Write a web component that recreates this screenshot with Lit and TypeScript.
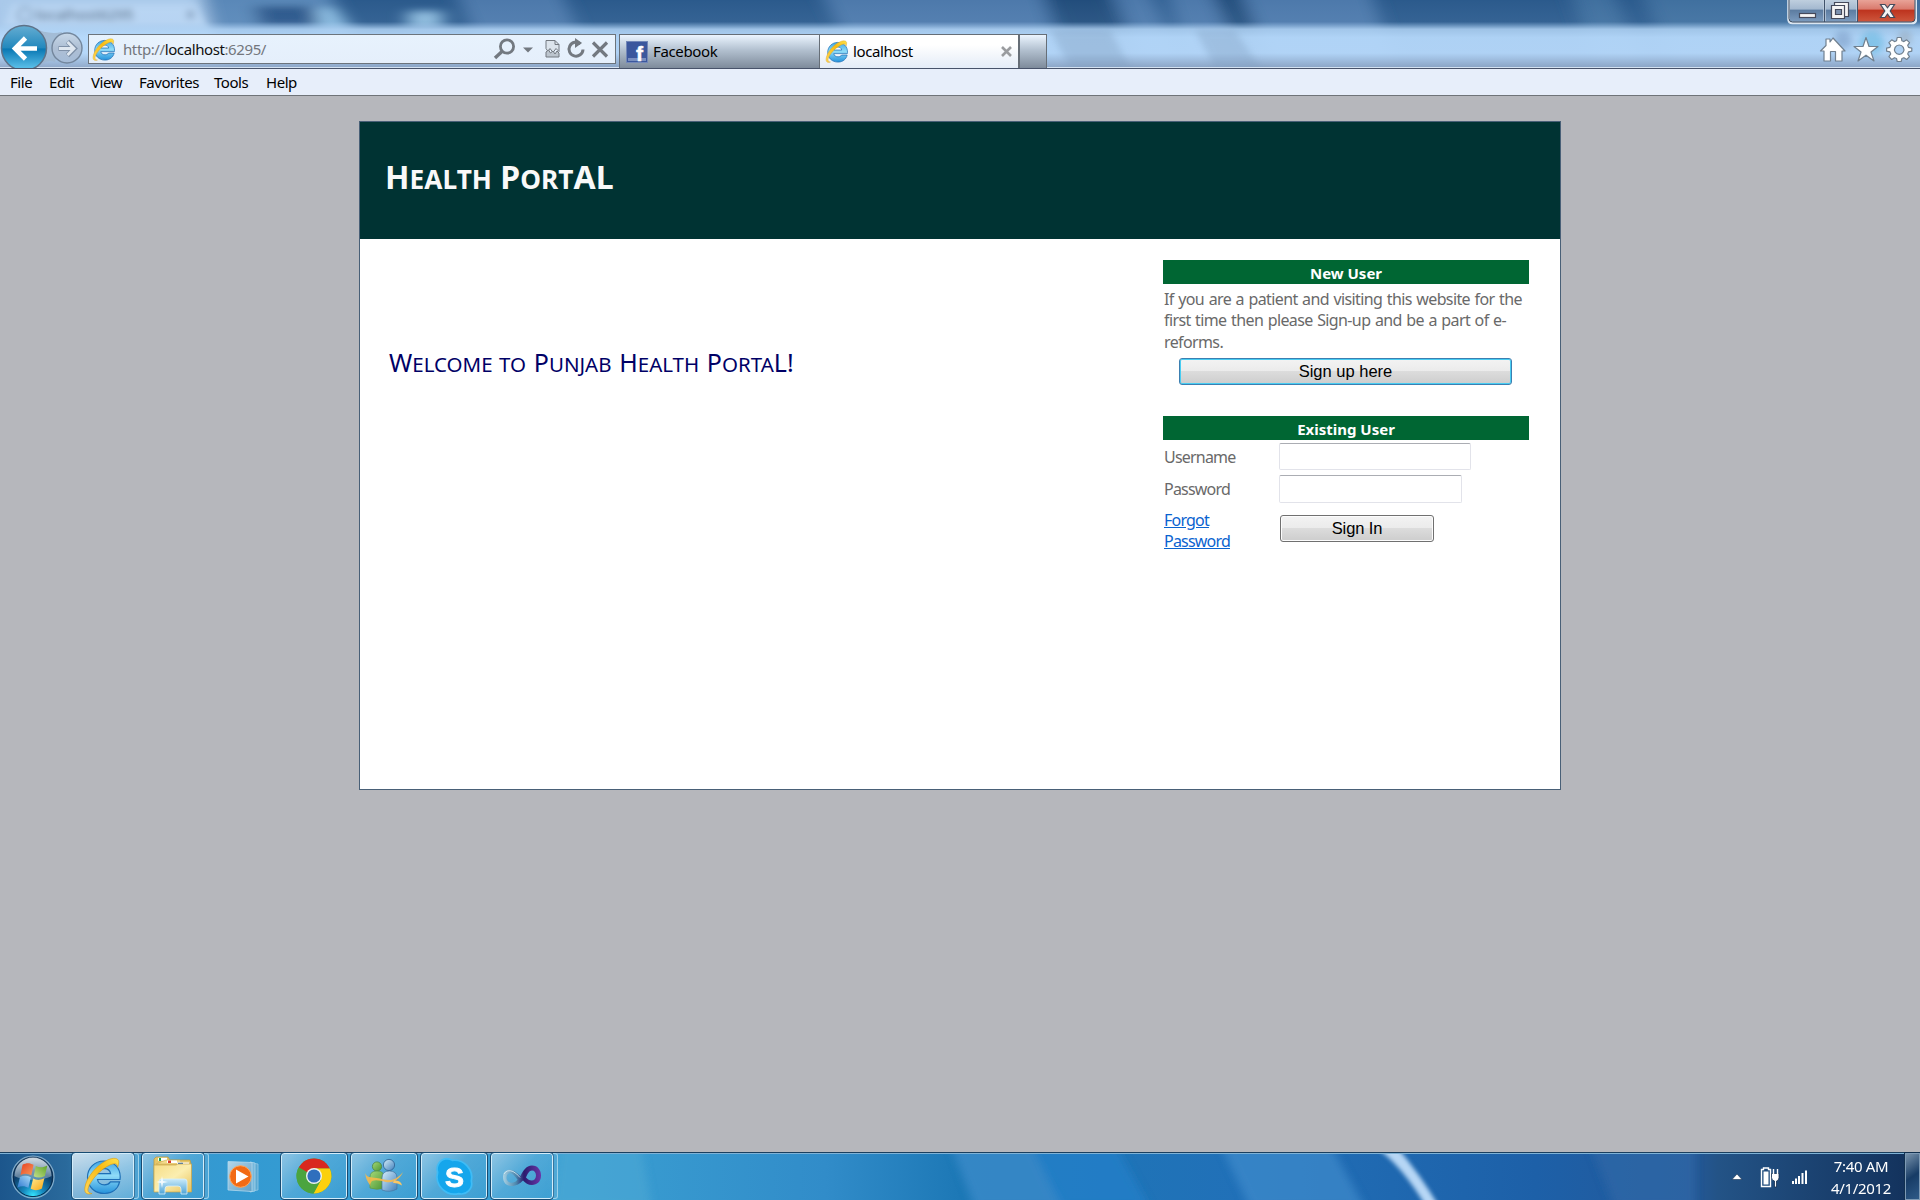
import { LitElement, html, svg, css } from "lit";
import { customElement } from "lit/decorators.js";

const ieLogo = (id: string) => html`<svg class="ie" viewBox="0 0 38 38">
  <defs>
    <linearGradient id="${id}b" x1="0" y1="0" x2="0" y2="1">
      <stop offset="0" stop-color="#3fa5e2" /><stop offset=".45" stop-color="#8fdcf8" /><stop offset="1" stop-color="#2592db" />
    </linearGradient>
    <linearGradient id="${id}g" x1="0" y1="1" x2="1" y2="0">
      <stop offset="0" stop-color="#ffd75a" /><stop offset=".6" stop-color="#f8bb12" /><stop offset="1" stop-color="#ffe14a" />
    </linearGradient>
  </defs>
  <path d="M37 22.500H14.500c.6 3.600 3.300 5.300 7 5.300 2.700 0 4.700-.9 5.900-2.900h9.200C34.900 32 29.300 36.500 21.500 36.500 11.800 36.500 4.500 29.800 4.500 20.300 4.500 11 11.800 4 21 4c9.800 0 16.500 6.900 16.200 16.500zM14.600 16.600h13c-.6-3.300-3-5-6.400-5-3.500 0-6 1.800-6.600 5z" fill="url(#${id}b)" stroke="#1e6fb6" stroke-width="1.200" fill-rule="evenodd" />
  <path d="M9 36.500C4 38 1.200 36 1.800 31 3 20.500 14 7.500 25 2.800c5.500-2.400 10.500-2 10.800 2 .1 1.800-.4 3.700-1.200 5.500.2-3.700-2.300-4.600-7.300-2.500C17.600 12 7.500 23.500 5.200 31c-1 3.200.5 5.200 3.800 5.500z" fill="url(#${id}g)" stroke="#d79a14" stroke-width=".6" />
</svg>`;

const startOrb = svg`
  <defs>
    <radialGradient id="orb" cx=".5" cy=".95" r=".85">
      <stop offset="0" stop-color="#35e6ff" /><stop offset=".3" stop-color="#1688bd" /><stop offset=".7" stop-color="#0c3d69" /><stop offset="1" stop-color="#3b6487" />
    </radialGradient>
    <linearGradient id="orbShine" x1="0" y1="0" x2="0" y2="1">
      <stop offset="0" stop-color="#fff" stop-opacity=".75" /><stop offset="1" stop-color="#fff" stop-opacity=".28" />
    </linearGradient>
    <linearGradient id="wr" x1="0" y1="0" x2="1" y2="1"><stop offset="0" stop-color="#e8401f" /><stop offset="1" stop-color="#f79a5c" /></linearGradient>
    <linearGradient id="wg" x1="1" y1="0" x2="0" y2="1"><stop offset="0" stop-color="#5da326" /><stop offset="1" stop-color="#c5e08c" /></linearGradient>
    <linearGradient id="wb" x1="0" y1="1" x2="1" y2="0"><stop offset="0" stop-color="#2e78cf" /><stop offset="1" stop-color="#a9dcfa" /></linearGradient>
    <linearGradient id="wy" x1="1" y1="1" x2="0" y2="0"><stop offset="0" stop-color="#f8a712" /><stop offset="1" stop-color="#fdea93" /></linearGradient>
  </defs>
  <circle cx="22" cy="22" r="21" fill="url(#orb)" stroke="#86aecb" stroke-width="1.2" />
  <circle cx="22" cy="22" r="19.600" fill="none" stroke="#0b2c4d" stroke-width="1" />
  <path d="M3.500 21a18.500 18.500 0 0 1 37 0c-9 5-28 5-37 0z" fill="url(#orbShine)" />
  <g transform="translate(-2.200 -1.200) scale(1.100)">
    <path d="M12.500 10c3.500-2 6.800-1.800 10 0l-2 9.500c-3.200-1.800-6.500-1.900-9.800-.3z" fill="url(#wr)" />
    <path d="M24.500 11c3.500 1.800 6.800 1.700 10.500-.3l-2.200 9.500c-3.500 1.800-6.900 1.900-10.200.2z" fill="url(#wg)" />
    <path d="M10.200 21.200c3.300-1.600 6.500-1.500 9.800.2l-2.200 9.500c-3.200-1.900-6.400-1.900-9.900-.2z" fill="url(#wb)" />
    <path d="M22.100 22.400c3.400 1.700 6.800 1.500 10.300-.3l-2.300 9.400c-3.600 2-6.900 2-10.200.3z" fill="url(#wy)" />
  </g>`;

const folderIcon = html`<svg width="40" height="40" viewBox="0 0 40 40">
  <defs><linearGradient id="fold" x1="0" y1="0" x2="1" y2="1"><stop offset="0" stop-color="#f6dc85" /><stop offset=".5" stop-color="#fbeeb0" /><stop offset="1" stop-color="#e6c15c" /></linearGradient>
  <linearGradient id="clip" x1="0" y1="0" x2="0" y2="1"><stop offset="0" stop-color="#c9eafa" /><stop offset="1" stop-color="#4fa3d6" /></linearGradient></defs>
  <path d="M1 3l2-2h12l2 3h20l1 4v25H1z" fill="#e5c668" stroke="#b9963b" stroke-width=".7" />
  <path d="M5 1.800h9v3H5z" fill="#fff" /><path d="M6 2h2v3H6z" fill="#1ba14a" />
  <path d="M3 8l10-4h14l2 4z" fill="#f3da8b" stroke="#c8a64d" stroke-width=".5" />
  <path d="M14 4.500h10v2.500H14z" fill="#fff" /><path d="M15 4.500h3V7h-3z" fill="#db3a26" />
  <path d="M24 6.500h12V9H24z" fill="#fff" /><path d="M25 6.800h5V9h-5z" fill="#2a6dc6" />
  <path d="M1 9h22l2-1h13.500v28H1z" fill="url(#fold)" stroke="#c9a64a" stroke-width=".7" />
  <path d="M6 38V25.500q0-2.500 2.500-2.500h23q2.500 0 2.500 2.500V38h-6v-5q0-3-3-3H15q-3 0-3 3v5z" fill="url(#clip)" stroke="#d9f1fc" stroke-width=".8" />
  <path d="M9 20l1 5 5 1-5 1-1 5-1-5-5-1 5-1z" fill="#fff" opacity=".85" />
</svg>`;

const playerIcon = html`<svg width="34" height="34" viewBox="0 0 34 34">
  <defs><linearGradient id="cover" x1="0" y1="0" x2="1" y2="1"><stop offset="0" stop-color="#b4d7ea" /><stop offset="1" stop-color="#5fa0c8" /></linearGradient></defs>
  <path d="M25 3l6 1v26l-6 1z" fill="#5aa9d3" stroke="#94c9e4" stroke-width=".8" />
  <path d="M23 2l5 1v28l-5 1z" fill="#76b8dc" stroke="#a6d3ea" stroke-width=".8" />
  <path d="M1 1.500l24 1v29l-24-1.500z" fill="url(#cover)" stroke="#b2d8ec" stroke-width=".8" />
  <circle cx="13.500" cy="16.500" r="10.800" fill="#f26a14" stroke="#ffa75e" /><path d="M9 9.500l12.500 7L9 23.500z" fill="#fff" />
</svg>`;

const chromeIcon = html`<svg width="36" height="36" viewBox="0 0 36 36">
  <circle cx="18" cy="18" r="17.500" fill="#4ba43f" />
  <path d="M18 18L2.800 9.300A17.500 17.500 0 0 1 33.800 10.500H18z" fill="#d9281f" />
  <path d="M18 10.500h15.800A17.500 17.500 0 0 1 17.500 35.500L25 21.500z" fill="#fbd00d" />
  <path d="M2.800 9.300A17.500 17.500 0 0 0 17.500 35.500L25 22l-7-3-7 2z" fill="#4ba43f" />
  <circle cx="18" cy="18" r="8" fill="#eef2f4" /><circle cx="18" cy="18" r="6.600" fill="#2f6fbd" />
</svg>`;

const buddiesIcon = html`<svg width="40" height="36" viewBox="0 0 40 36">
  <defs><linearGradient id="gb" x1="0" y1="0" x2="1" y2="1"><stop offset="0" stop-color="#a5d977" /><stop offset="1" stop-color="#4b9534" /></linearGradient>
  <linearGradient id="bb" x1="0" y1="0" x2="1" y2="1"><stop offset="0" stop-color="#d6eefb" /><stop offset="1" stop-color="#3f7fbb" /></linearGradient></defs>
  <circle cx="13" cy="8.500" r="4.600" fill="url(#gb)" stroke="#467f36" stroke-width=".7" />
  <path d="M6 30V19q0-6 7-6t7 6v11q-7 2.500-14 0z" fill="url(#gb)" stroke="#5b9a45" stroke-width=".7" />
  <circle cx="25" cy="7" r="5.600" fill="url(#bb)" stroke="#2f5f8f" stroke-width=".8" />
  <path d="M18 32V20q0-7 7.500-7t7.500 7v11q-7 4-15 1z" fill="url(#bb)" stroke="#48759f" stroke-width=".7" />
  <path d="M1.500 15c1 5 5 4 11 5C22 21.500 29 26 39 14c-4 9-11 11-17 10S13 21.500 8 23c-1 1-2 3-1.500 5C4 24 1 20 1.500 15z" fill="#fbb94a" opacity=".88" />
  <path d="M30 22.500q7-.5 8 5-4-3-9-2.500z" fill="#fbc765" />
</svg>`;

const skypeIcon = html`<svg class="skype" width="39" height="39" viewBox="0.500 0 37 37">
  <path d="M11.500 1.500A10 10 0 0 0 3 14.500 16.500 16.500 0 0 0 23 34.700 9.800 9.800 0 0 0 35 22.800 16.500 16.500 0 0 0 17 3.200 10 10 0 0 0 11.500 1.500z" fill="#15a6ec" stroke="#3fbcf6" stroke-width="1.600" />
  <text x="19" y="28" text-anchor="middle" font-family="Liberation Sans, sans-serif" font-weight="bold" font-size="27" fill="#fff" stroke="#fff" stroke-width=".8">S</text>
</svg>`;

const studioIcon = html`<svg width="40" height="24" viewBox="0 0 40 24">
  <defs><linearGradient id="inf" x1="0" y1="0" x2="1" y2="0"><stop offset="0" stop-color="#a9d2e4" /><stop offset=".35" stop-color="#4b86ad" /><stop offset=".55" stop-color="#2b1b6d" /><stop offset="1" stop-color="#6a35a8" /></linearGradient></defs>
  <path fill="url(#inf)" fill-rule="evenodd" d="M1 13C1 7 6 4.500 11 6.500c3 1.200 5 3.500 7.500 5.500C21 7 24 1.500 30 1.500c6 0 9 5 9 10 0 6-4 9.500-9 9.500-4 0-6.500-2-9-4.500C18 19.500 14.500 22 9.500 22 4 22 1 18 1 13zM4.500 13.500c0 3.500 2.500 5.500 6 5.200 2-.2 3.800-1.500 5-3.200C13 12.500 10.500 9 7.800 9c-2 .2-3.300 2-3.300 4.500zM24 13.500c1.800 2 3.500 3 5.500 3 2.700 0 4.500-2 4.500-5s-1.500-5-4-5c-2.800 0-4.500 3.500-6 7z" />
  <path d="M2 10Q5 5 11 7.500 15 9.500 18 13.500" fill="none" stroke="#d8eef7" stroke-width="1" opacity=".8" />
</svg>`;

@customElement("browser-chrome")
class BrowserChrome extends LitElement {
  static styles = css`
    :host { display: block; position: relative; height: 96px; font: 15px "Noto Sans", sans-serif; color: #000; overflow: hidden; }
    .glass { position: absolute; inset: 0; width: 1920px; height: 68px; }
    .window { position: absolute; top: 0; right: 3px; }
    .bar { position: relative; display: flex; height: 34px; padding-top: 34px; }
    .nav { width: 88px; flex: none; margin-top: -10px; height: 44px; }
    .address { box-sizing: border-box; width: 528px; height: 30px; flex: none; border: 1px solid #6c747c; display: flex; align-items: center; padding-left: 3px; background: linear-gradient(#e7f2fd, #e5effb); }
    .ie { display: block; width: 23px; height: 23px; flex: none; }
    .url { color: #73777d; margin-left: 8px; flex: 1; white-space: nowrap; letter-spacing: -.4px; }
    .url b { color: #111; font-weight: 400; }
    .tools { flex: none; display: block; margin-right: 4px; }
    .tab { box-sizing: border-box; height: 34px; border: 1px solid #666e77; border-bottom: 0; display: flex; align-items: center; background: linear-gradient(#ebf5ff, #b3c1d0 45%, #7e8b9b); padding: 0 6px; letter-spacing: -.35px; }
    .fb { width: 201px; margin-left: 3px; }
    .active { width: 200px; margin-left: -1px; background: linear-gradient(#fff 30%, #e4ecf7); padding-left: 5px; }
    .active .label { margin-left: 5px; letter-spacing: -.4px; }
    .fresh { width: 28px; }
    .label { flex: 1; margin-left: 5px; line-height: 20px; padding-bottom: 1px; }
    .fbmark { display: block; width: 22px; height: 22px; overflow: visible; }
    .actions { margin-left: auto; margin-right: 7px; display: block; }
    .menu { box-sizing: border-box; position: relative; height: 28px; border-top: 1px solid #48536a; border-bottom: 1px solid #6f7378; background: #e7eefa; display: grid; grid-template-columns: 39px 42px 48px 75px 52px auto; padding: 0 0 0 10px; line-height: 27px; letter-spacing: -.45px; }
  `;
  render() {
    return html`
      <svg class="glass" viewBox="0 0 1920 68">
        <defs>
          <filter id="soft" x="-5%" y="-40%" width="110%" height="180%"><feGaussianBlur stdDeviation="9 3.500" /></filter>
          <filter id="haze" x="-20%" y="-60%" width="140%" height="220%"><feGaussianBlur stdDeviation="3.500" /></filter>
          <linearGradient id="frost" x1="0" y1="0" x2="0" y2="1">
            <stop offset="0" stop-color="#b6d8fa" stop-opacity="0" /><stop offset=".32" stop-color="#a4c8ec" stop-opacity=".08" />
            <stop offset=".43" stop-color="#aed1f3" stop-opacity=".88" /><stop offset=".55" stop-color="#b6d9fb" stop-opacity=".94" /><stop offset=".78" stop-color="#b6d8fa" stop-opacity=".95" />
            <stop offset="1" stop-color="#8ea6c6" stop-opacity=".95" />
          </linearGradient>
        </defs>
        <rect width="1920" height="68" fill="#2b5a8c" />
        <g filter="url(#soft)">
          <path d="M-20-10H200L245 80H-20z" fill="#a9c9ea" />
          <path d="M200-10H330L365 80H225z" fill="#5a88b8" />
          <path d="M255 6h55l14 20h-64z" fill="#2a568a" />
          <path d="M316 8h20l18 24h-36z" fill="#8abbe0" />
          <path d="M455-10H560L600 80H495zM820-10H1040L1070 80H865zM1112-10H1150L1190 80H1150zM1165-10H1210L1250 80H1195zM1240-10H1370L1400 80H1280z" fill="#4d79ab" />
          <path d="M1570-10H1612L1650 80H1600zM1640-10H1930V80H1680z" fill="#41709f" />
          <path d="M1045-10H1106L1145 80H1080zM1212-10H1238L1278 80H1250z" fill="#204e7c" />
          <rect x="408" y="11" width="34" height="18" fill="#8ebbdd" />
        </g>
        <g filter="url(#haze)">
          <path d="M-10 60L12 4H196L222 60z" fill="#b9d5f3" />
          <circle cx="25" cy="15" r="7" fill="none" stroke="#7390af" stroke-width="2" />
          <text x="36" y="20" font-family="Noto Sans, sans-serif" font-size="15" fill="#1d344f">localhost6295</text>
          <path d="M187 11l7 7m0-7l-7 7" stroke="#6682a2" stroke-width="2" />
        </g>
        <rect width="1920" height="68" fill="url(#frost)" />
        <g filter="url(#haze)" opacity=".35">
          <path d="M1050 30h60l20 38h-60zM1195 30h40l25 38h-45z" fill="#7e9cbd" />
          <circle cx="1843" cy="40" r="9" fill="#5877a6" /><circle cx="1872" cy="43" r="12" fill="#36a7d2" /><circle cx="1905" cy="38" r="7" fill="#888" />
        </g>
        <path d="M0 67.500H1920" stroke="#d3e1f1" />
      </svg>
      <svg class="window" width="130" height="25" viewBox="0 0 130 25">
        <defs>
          <linearGradient id="wn" x1="0" y1="0" x2="0" y2="1"><stop offset="0" stop-color="#c2d1e0" /><stop offset=".43" stop-color="#a3b8cf" /><stop offset=".45" stop-color="#5b7ba0" /><stop offset="1" stop-color="#7f9fc2" /></linearGradient>
          <linearGradient id="wx" x1="0" y1="0" x2="0" y2="1"><stop offset="0" stop-color="#eaa79c" /><stop offset=".43" stop-color="#d9796c" /><stop offset=".45" stop-color="#bd321d" /><stop offset="1" stop-color="#cf5a40" /></linearGradient>
        </defs>
        <path d="M1-1V19q0 4 4 4H125q4 0 4-4V-1z" fill="url(#wn)" />
        <path d="M70-1h59V19q0 4-4 4H70z" fill="url(#wx)" />
        <path d="M1.500-1V19q0 4 4 4H125q4 0 4-4V-1" fill="none" stroke="#dbe6f1" stroke-width="2.600" />
        <path d="M2-1V18.500q0 3.500 3.500 3.500H124.500q3.500 0 3.500-3.500V-1" fill="none" stroke="#364558" />
        <path d="M37.500 0V22M70.500 0V22" stroke="#40526a" /><path d="M36.500 0V21M38.500 0V21M69.500 0V21" stroke="#c5d3e2" opacity=".7" />
        <g fill="#f5f5f5" stroke="#454a5b" stroke-width="1.200">
          <rect x="12.500" y="13.500" width="16" height="4" />
          <path d="M47.500 2.500h14v14h-14z" /><path d="M44.500 5.500h13v13h-13z" /><path d="M48.500 9.500h6v5h-6z" fill="#7c92b0" />
          <path d="M93.500 4.500h4.500l2.500 3.300 2.500-3.300h4.500L103.200 11l4.300 6.500H103l-2.500-3.500-2.500 3.500h-4.500l4.300-6.500z" />
        </g>
      </svg>
      <div class="bar">
        <svg class="nav" viewBox="0 0 88 44">
          <defs>
            <linearGradient id="back" x1="0" y1="0" x2="0" y2="1"><stop offset="0" stop-color="#65add2" /><stop offset=".5" stop-color="#2288bd" /><stop offset=".52" stop-color="#0877b3" /><stop offset="1" stop-color="#65c8ef" /></linearGradient>
            <linearGradient id="fwd" x1="0" y1="0" x2="0" y2="1"><stop offset="0" stop-color="#c7d8e9" /><stop offset=".5" stop-color="#aebfd4" /><stop offset="1" stop-color="#a5bcd8" /></linearGradient>
          </defs>
          <path d="M34 4Q48 11 62 8L55 38Q48 35 42 40z" fill="#9fb5cd" opacity=".8" />
          <circle cx="24" cy="24" r="22.500" fill="url(#back)" stroke="#5e7288" stroke-width="1.500" />
          <path d="M37 24.500H15M25.500 14L15 24.500 25.500 35" fill="none" stroke="#fff" stroke-width="4.600" />
          <circle cx="67" cy="24" r="15" fill="url(#fwd)" stroke="#73869c" stroke-width="1.400" />
          <path d="M58.500 24.500H73M67.500 17.500l7 7-7 7" fill="none" stroke="#7f91a8" stroke-width="4.800" />
          <path d="M59 24.500H73M67.500 18l6.500 6.500-6.500 6.500" fill="none" stroke="#dfe7f0" stroke-width="2.800" />
        </svg>
        <div class="address">
          ${ieLogo("a")}
          <span class="url">http://<b>localhost</b>:6295/</span>
          <svg class="tools" width="120" height="22" viewBox="0 0 120 22">
            <g fill="none" stroke="#737980">
              <circle cx="16" cy="8.500" r="6.600" stroke-width="2.800" /><path d="M11.500 13L4 20" stroke-width="3.400" />
              <path d="M89.500 5.800A7 7 0 1 0 92 11.500" stroke-width="3" />
              <path d="M102 4.500l14 14m0-14l-14 14" stroke-width="3.200" />
            </g>
            <path d="M32 9.500h10l-5 5z" fill="#737980" /><path d="M84 0l7 5-7 5z" fill="#737980" />
            <path d="M55 2.500h9l4 4v7l-3-3-3 4-3-4-2 3-2-3z" fill="#dce4ec" stroke="#737980" />
            <path d="M55 19V14l2.500-2 2 3 2.500-2 2 3 2-3 2 2v4z" fill="#bcc5ce" stroke="#737980" /><path d="M64 2.500v4h4" fill="none" stroke="#737980" />
          </svg>
        </div>
        <div class="tab fb">
          <svg class="fbmark" viewBox="0 0 22 22"><rect x=".5" y=".5" width="21" height="21" fill="#3b579d" stroke="#7287b8" /><path d="M2 17h18v3H2z" fill="#7a8fc0" /><text x="10" y="20" font-family="Liberation Sans, sans-serif" font-weight="bold" font-size="21" fill="#fff" stroke="#fff" stroke-width=".5">f</text></svg>
          <span class="label">Facebook</span>
        </div>
        <div class="tab active">${ieLogo("t")}<span class="label">localhost</span>
          <svg width="11" height="11" viewBox="0 0 11 11"><path d="M1 1l9 9M10 1l-9 9" stroke="#9a9c9f" stroke-width="2.600" /></svg>
        </div>
        <div class="tab fresh"></div>
        <svg class="actions" width="94" height="30" viewBox="0 0 94 30">
          <g fill="#fff" stroke="#71808f" stroke-width="1.200" stroke-linejoin="round">
            <path d="M1.500 17L7 11.500V5h4v3l3-4L26 17h-3v10h-6.500V17.500h-5V27H5V17z" />
            <path d="M47 3.500l3 9h9l-7 5.500 3 9-8-5.800-8 5.800 3-9-7-5.500h9z" />
            <path fill-rule="evenodd" d="M78.200 3.500h4l.7 3.300 2 .8 2.800-1.800 2.800 2.800-1.800 2.800.8 2 3.300.7v3l-3.300.8-.8 2 1.800 2.800-2.800 2.800-2.800-1.800-2 .8-.7 3h-4l-.7-3-2-.8-2.800 1.800-2.800-2.800 1.800-2.800-.8-2-3.300-.8v-3l3.300-.7.8-2-1.800-2.800L72.700 5.800 75.500 7.600l2-.8zM80.200 11a4.700 4.700 0 1 0 .01 0z" />
          </g>
        </svg>
      </div>
      <div class="menu"><span>File</span><span>Edit</span><span>View</span><span>Favorites</span><span>Tools</span><span>Help</span></div>`;
  }
}

@customElement("portal-page")
class PortalPage extends LitElement {
  static styles = css`
    :host { display: flex; flex: 1; justify-content: center; align-items: flex-start; padding-top: 25px; background: #b6b7bc; font: 16px/21.400px "Noto Sans", sans-serif; color: #696969; }
    .panel { box-sizing: border-box; width: 1202px; height: 669px; border: 1px solid #496077; background: #fff; }
    header { height: 117px; background: #003333; box-sizing: border-box; padding: 33px 0 0 25px; }
    h1 { margin: 0; font: bold 32px/44px "Noto Sans", sans-serif; color: #f9f9f9; white-space: nowrap; letter-spacing: .05px; }
    h2 { margin: 0; font: 25px/34px "Noto Sans", sans-serif; color: #000066; white-space: nowrap; letter-spacing: 0; word-spacing: 1.200px; }
    .sc { text-transform: uppercase; font-size: .82em; }
    .body { display: grid; grid-template-columns: 774px 366px; padding-left: 29px; }
    .welcome { padding-top: 106px; }
    aside { padding-top: 21px; }
    .heading { height: 24px; background: #006633; color: #fff; font-weight: bold; font-size: 15px; line-height: 26px; text-align: center; letter-spacing: 0; }
    .intro { margin: 5px 0 5px 1px; white-space: nowrap; letter-spacing: -.62px; word-spacing: 1px; }
    button { display: block; box-sizing: border-box; height: 27px; padding: 0; border: 1px solid #707070; border-radius: 3px; box-shadow: inset 0 0 0 1px #fcfcfc; background: linear-gradient(#f3f3f3, #ebebeb 49%, #dcdcdc 50%, #cdcdcd); font: 16.500px/23px "Liberation Sans", sans-serif; color: #000; }
    .signup { width: 333px; margin: 0 0 31px 16px; border-color: #3c7fb1; box-shadow: inset 0 0 0 1px #48cdf2; }
    .row { display: grid; grid-template-columns: 116px auto; letter-spacing: -.8px; }
    .name { line-height: 27px; padding: 1px 0 0 1px; }
    .row.user { padding-top: 3px; height: 32px; }
    .row.pass { height: 35px; }
    .row.end { padding-top: 0; }
    input { box-sizing: border-box; height: 27px; border: 1px solid #e2e3ea; border-top-color: #abadb3; border-radius: 2px; width: 192px; padding: 0; }
    .pass input { width: 183px; height: 28px; }
    a { color: #0a63d0; text-decoration: underline; width: 80px; padding-left: 1px; line-height: 21px; }
    .end button { width: 154px; margin: 5px 0 0 1px; letter-spacing: -.1px; }
  `;
  render() {
    return html`<div class="panel">
      <header><h1>H<span class="sc">ealth</span> P<span class="sc">ort</span>AL</h1></header>
      <div class="body">
        <div class="welcome"><h2>W<span class="sc">elcome to</span> P<span class="sc">unjab</span> H<span class="sc">ealth</span> P<span class="sc">orta</span>L!</h2></div>
        <aside>
          <div class="heading">New User</div>
          <p class="intro">If you are a patient and visiting this website for the<br />first time then please Sign-up and be a part of e-<br />reforms.</p>
          <button class="signup">Sign up here</button>
          <div class="heading">Existing User</div>
          <div class="row user"><span class="name">Username</span><input /></div>
          <div class="row pass"><span class="name">Password</span><input type="password" /></div>
          <div class="row end"><a>Forgot<br />Password</a><button>Sign In</button></div>
        </aside>
      </div>
    </div>`;
  }
}

@customElement("task-bar")
class TaskBar extends LitElement {
  static styles = css`
    :host { display: block; position: relative; height: 48px; overflow: hidden; font: 15px/22px "Noto Sans", sans-serif; color: #fff; }
    .wall { position: absolute; inset: 0; width: 1920px; height: 48px; }
    .bar { position: relative; display: flex; height: 47px; padding-top: 1px; }
    .orb { flex: none; margin: 2px 17px 0 11px; width: 44px; height: 44px; }
    .app { box-sizing: border-box; height: 46px; width: 66px; margin-right: 4px; border: 1px solid #d3ecf9; border-radius: 3px; outline: 1px solid #174b72; outline-offset: 0; display: flex; justify-content: center; align-items: center; background: linear-gradient(135deg, #a4cfe8cc, #62b1dc99 45%, #45a2d466); flex: none; }
    .focus { background: linear-gradient(160deg, #e1eef7dd, #a6d0eacc 50%, #76b9dfaa); }
    .stack { width: 62px; margin-right: 0; }
    .edge { box-sizing: border-box; width: 5px; height: 46px; border: 1px solid #9bd0ea; border-left: 0; border-radius: 0 3px 3px 0; margin-right: 3px; flex: none; background: #6bb4dc66; }
    .bare { box-sizing: border-box; width: 69px; padding-right: 5px; display: flex; justify-content: center; align-items: center; flex: none; }
    .ie { width: 38px; height: 38px; margin-right: 2px; }
    .skype { overflow: visible; }
    .tray { margin-left: auto; display: flex; }
    .icons { display: block; }
    .clock { width: 80px; text-align: center; padding-top: 2px; margin: 0 4px 0 9px; letter-spacing: -.35px; }
    .peek { box-sizing: border-box; width: 15px; height: 47px; border: 1px solid #7d9ab5; outline: 1px solid #12304f; background: linear-gradient(145deg, #7892ab, #173c66 50%, #2e5a88); }
  `;
  render() {
    return html`
      <svg class="wall" viewBox="0 0 1920 48">
        <defs>
          <linearGradient id="sky" x1="0" y1="0" x2="1" y2="0">
            <stop offset="0" stop-color="#1c568c" /><stop offset=".035" stop-color="#2a6a9c" /><stop offset=".06" stop-color="#3b97cb" /><stop offset=".12" stop-color="#339ad2" /><stop offset=".3" stop-color="#3a9fd2" /><stop offset=".43" stop-color="#318cc9" /><stop offset=".5" stop-color="#1d78b6" /><stop offset=".65" stop-color="#2170b8" /><stop offset=".8" stop-color="#1d60a8" /><stop offset=".88" stop-color="#23599a" /><stop offset=".895" stop-color="#235386" /><stop offset="1" stop-color="#12305a" />
          </linearGradient>
          <filter id="blurry" x="-10%" y="-30%" width="120%" height="160%"><feGaussianBlur stdDeviation="4" /></filter>
          <filter id="streak" x="-50%" y="-30%" width="200%" height="160%"><feGaussianBlur stdDeviation="2.200" /></filter>
        </defs>
        <rect width="1920" height="48" fill="url(#sky)" />
        <g filter="url(#blurry)">
          <path d="M950-8h80l35 64h-90zM1220-8h110l35 64h-115z" fill="#4794d1" opacity=".55" />
          <path d="M1030-8h85l35 64h-90z" fill="#2480cb" opacity=".7" />
          <path d="M560-8h80l12 64h-100z" fill="#59afd8" opacity=".4" />
          <path d="M1590-8h105v64h-80z" fill="#336aa9" opacity=".6" />
        </g>
        <path d="M1374-6h22q24 28 44 62h-13q-26-44-53-62z" fill="#b7d7f5" filter="url(#streak)" />
        <path d="M0 .5H1920" stroke="#1b3f5e" /><path d="M0 1.500H1920" stroke="#7eb2d6" />
      </svg>
      <div class="bar">
        <svg class="orb" viewBox="0 0 44 44">${startOrb}</svg>
        <div class="app stack focus">${ieLogo("k")}</div><div class="edge"></div>
        <div class="app stack">${folderIcon}</div><div class="edge"></div>
        <div class="bare">${playerIcon}</div>
        <div class="app">${chromeIcon}</div>
        <div class="app">${buddiesIcon}</div>
        <div class="app">${skypeIcon}</div>
        <div class="app stack">${studioIcon}</div><div class="edge"></div>
        <div class="tray">
          <svg class="icons" width="90" height="46" viewBox="0 0 90 46">
            <path d="M10 26.500l5-5.500 5 5.500z" fill="#fff" stroke="#16304f" stroke-width=".6" />
            <path d="M39.500 16.500v17h9v-17h-2v-1.500h-5v1.500z" fill="none" stroke="#fff" stroke-width="1.400" /><path d="M41.500 18.500h5v13h-5z" fill="#fff" />
            <path d="M49.500 20.500h7.500v4q0 3-2.500 3.500V34h-2v-6q-3-.5-3-3.500z" fill="#fff" stroke="#16304f" stroke-width=".8" /><path d="M51.500 16v5M55.500 16v5" stroke="#fff" stroke-width="1.400" />
            <path d="M70 28h2v3h-2zM73 25.500h2V31h-2zM76 23h2v8h-2zM79.500 20h2v11h-2zM83 17.500h2V31h-2z" fill="#fff" />
          </svg>
          <div class="clock">7:40 AM<br />4/1/2012</div>
          <div class="peek"></div>
        </div>
      </div>`;
  }
}

@customElement("app-root")
class AppRoot extends LitElement {
  static styles = css`:host { display: flex; flex-direction: column; width: 1920px; height: 1200px; overflow: hidden; }`;
  render() {
    return html`<browser-chrome></browser-chrome><portal-page></portal-page><task-bar></task-bar>`;
  }
}
